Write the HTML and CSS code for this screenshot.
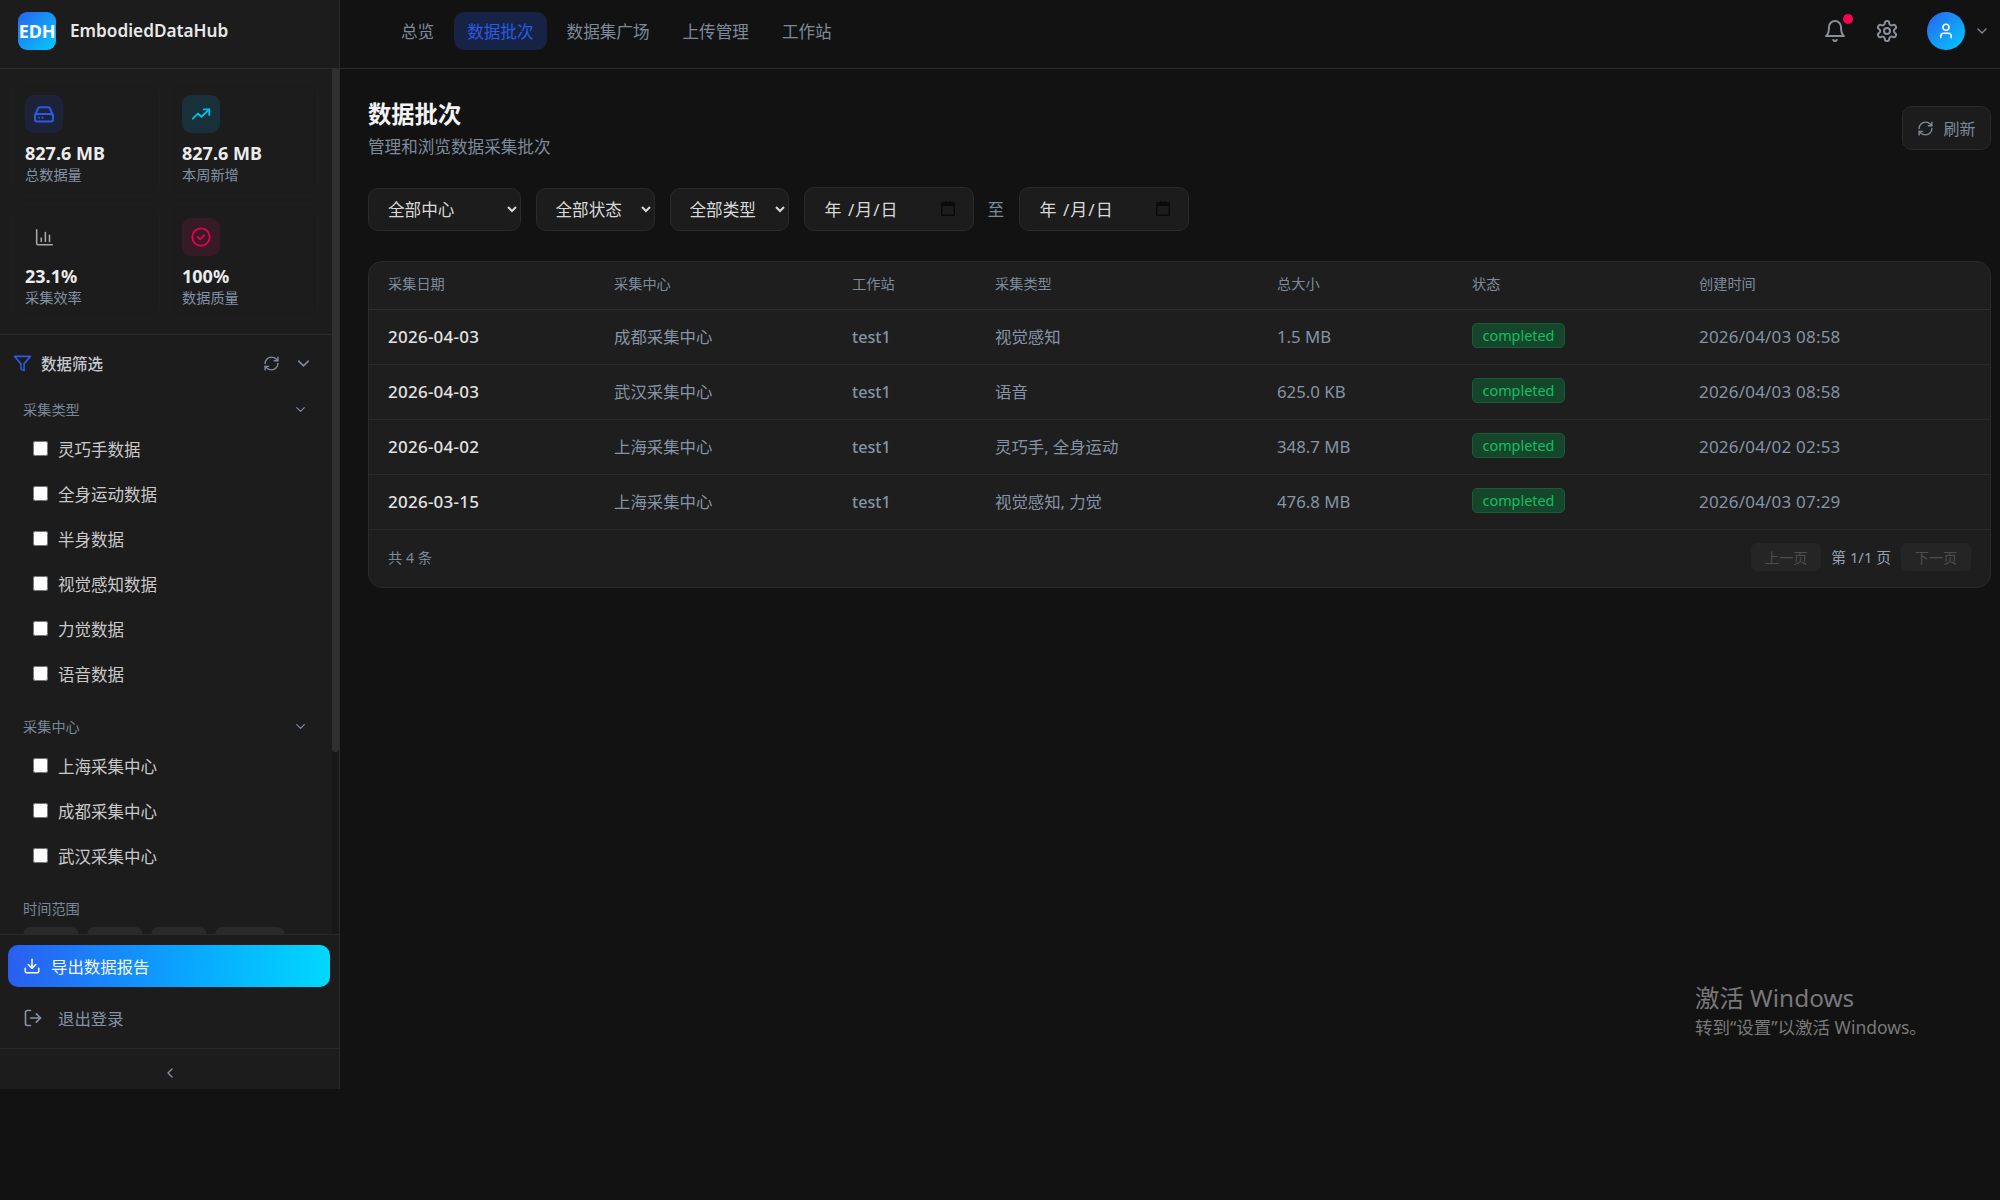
FILE: index.html
```html
<!DOCTYPE html>
<html lang="zh-CN">
<head>
<meta charset="utf-8">
<title>EmbodiedDataHub</title>
<link rel="stylesheet" href="styles.css">
</head>
<body>
<svg class="defs" width="0" height="0" aria-hidden="true">
  <symbol id="i-refresh" viewBox="0 0 24 24"><path d="M3 12a9 9 0 0 1 9-9 9.75 9.75 0 0 1 6.74 2.74L21 8"/><path d="M21 3v5h-5"/><path d="M21 12a9 9 0 0 1-9 9 9.75 9.75 0 0 1-6.74-2.74L3 16"/><path d="M8 16H3v5"/></symbol>
  <symbol id="i-chev" viewBox="0 0 24 24"><path d="m6 9 6 6 6-6"/></symbol>
  <symbol id="i-cal" viewBox="0 0 14 15"><path class="solid" d="M1.5 1H4V0h1.5v1h3V0H10v1h2.5A1.5 1.5 0 0 1 14 2.5v11a1.5 1.5 0 0 1-1.500 1.500h-11A1.500 1.500 0 0 1 0 13.500v-11A1.500 1.500 0 0 1 1.500 1zM1.500 5v8.500h11V5z"/></symbol>
</svg>

<div class="app">
  <aside class="sidebar">
    <div class="brand">
      <div class="logo">EDH</div>
      <span class="brand-name">EmbodiedDataHub</span>
    </div>

    <div class="side-pane">
      <div class="side-scroll">
        <section class="stats">
          <div class="stat">
            <div class="stat-icon tone-blue"><svg class="ico" viewBox="0 0 24 24"><path d="M3 13.500 6 6.500A2 2 0 0 1 7.800 5.300h8.400A2 2 0 0 1 18 6.500l3 7"/><rect x="3" y="12" width="18" height="7.500" rx="2"/><path d="M7 15.800h.01M10.500 15.800h.01"/></svg></div>
            <div class="stat-value">827.6 MB</div>
            <div class="stat-label">总数据量</div>
          </div>
          <div class="stat">
            <div class="stat-icon tone-cyan"><svg class="ico" viewBox="0 0 24 24"><path d="m3 17 5.500-5.500 4 3.500L21 7"/><path d="M15 7h6v6"/></svg></div>
            <div class="stat-value">827.6 MB</div>
            <div class="stat-label">本周新增</div>
          </div>
          <div class="stat">
            <div class="stat-icon tone-grey"><svg class="ico thin" viewBox="0 0 24 24"><path d="M4 4v15a1.500 1.500 0 0 0 1.500 1.500H21"/><path d="M9 17v-4M13.500 17V7M18 17v-7"/></svg></div>
            <div class="stat-value">23.1%</div>
            <div class="stat-label">采集效率</div>
          </div>
          <div class="stat">
            <div class="stat-icon tone-red"><svg class="ico" viewBox="0 0 24 24"><circle cx="12" cy="12" r="9.500"/><path d="m8.500 12 2.500 2.500 4.500-4.500"/></svg></div>
            <div class="stat-value">100%</div>
            <div class="stat-label">数据质量</div>
          </div>
        </section>

        <section class="filters">
          <div class="filter-head">
            <svg class="ico funnel" viewBox="0 0 24 24"><path d="M22 3H2l8 9.460V19l4 2v-8.540z"/></svg>
            <span class="filter-title">数据筛选</span>
            <svg class="ico head-refresh"><use href="#i-refresh"/></svg>
            <svg class="ico head-chev"><use href="#i-chev"/></svg>
          </div>

          <div class="group">
            <div class="group-label"><span>采集类型</span><svg class="ico group-chev"><use href="#i-chev"/></svg></div>
            <label class="check"><input type="checkbox"><span>灵巧手数据</span></label>
            <label class="check"><input type="checkbox"><span>全身运动数据</span></label>
            <label class="check"><input type="checkbox"><span>半身数据</span></label>
            <label class="check"><input type="checkbox"><span>视觉感知数据</span></label>
            <label class="check"><input type="checkbox"><span>力觉数据</span></label>
            <label class="check"><input type="checkbox"><span>语音数据</span></label>
          </div>

          <div class="group">
            <div class="group-label"><span>采集中心</span><svg class="ico group-chev"><use href="#i-chev"/></svg></div>
            <label class="check"><input type="checkbox"><span>上海采集中心</span></label>
            <label class="check"><input type="checkbox"><span>成都采集中心</span></label>
            <label class="check"><input type="checkbox"><span>武汉采集中心</span></label>
          </div>

          <div class="group">
            <div class="group-label"><span>时间范围</span></div>
            <div class="chips">
              <span class="chip"></span>
              <span class="chip"></span>
              <span class="chip"></span>
              <span class="chip chip-wide"></span>
            </div>
          </div>
        </section>
      </div>
      <div class="scroll-track"><div class="scroll-thumb"></div></div>
    </div>

    <div class="side-foot">
      <button class="export"><svg class="ico"  viewBox="0 0 24 24"><path d="M21 15v4a2 2 0 0 1-2 2H5a2 2 0 0 1-2-2v-4"/><path d="m7 10 5 5 5-5"/><path d="M12 15V3"/></svg><span>导出数据报告</span></button>
      <div class="logout"><svg class="ico" viewBox="0 0 24 24"><path d="M9 21H5a2 2 0 0 1-2-2V5a2 2 0 0 1 2-2h4"/><path d="m16 17 5-5-5-5"/><path d="M21 12H9"/></svg><span>退出登录</span></div>
    </div>
    <div class="collapse"><svg class="ico" viewBox="0 0 24 24"><path d="m15 18-6-6 6-6"/></svg></div>
  </aside>

  <div class="content">
    <header class="topbar">
      <nav class="nav">
        <a class="nav-item">总览</a>
        <a class="nav-item active">数据批次</a>
        <a class="nav-item">数据集广场</a>
        <a class="nav-item">上传管理</a>
        <a class="nav-item">工作站</a>
      </nav>
      <div class="top-actions">
        <div class="bell">
          <svg class="ico" viewBox="0 0 24 24"><path d="M6 8a6 6 0 0 1 12 0c0 7 3 9 3 9H3s3-2 3-9"/><path d="M10.300 21a1.940 1.940 0 0 0 3.400 0"/></svg>
          <span class="dot"></span>
        </div>
        <svg class="ico gear" viewBox="0 0 24 24"><path d="M12.220 2h-.44a2 2 0 0 0-2 2v.18a2 2 0 0 1-1 1.730l-.43.25a2 2 0 0 1-2 0l-.15-.08a2 2 0 0 0-2.730.73l-.22.38a2 2 0 0 0 .73 2.730l.15.1a2 2 0 0 1 1 1.720v.51a2 2 0 0 1-1 1.740l-.15.09a2 2 0 0 0-.73 2.730l.22.38a2 2 0 0 0 2.730.73l.15-.08a2 2 0 0 1 2 0l.43.25a2 2 0 0 1 1 1.730V20a2 2 0 0 0 2 2h.44a2 2 0 0 0 2-2v-.18a2 2 0 0 1 1-1.730l.43-.25a2 2 0 0 1 2 0l.15.08a2 2 0 0 0 2.730-.73l.22-.39a2 2 0 0 0-.73-2.730l-.15-.08a2 2 0 0 1-1-1.740v-.5a2 2 0 0 1 1-1.740l.15-.09a2 2 0 0 0 .73-2.730l-.22-.38a2 2 0 0 0-2.730-.73l-.15.08a2 2 0 0 1-2 0l-.43-.25a2 2 0 0 1-1-1.730V4a2 2 0 0 0-2-2z"/><circle cx="12" cy="12" r="3"/></svg>
        <div class="avatar"><svg class="ico" viewBox="0 0 24 24"><path d="M19 21v-2a4 4 0 0 0-4-4H9a4 4 0 0 0-4 4v2"/><circle cx="12" cy="7" r="4"/></svg></div>
        <svg class="ico avatar-chev"><use href="#i-chev"/></svg>
      </div>
    </header>

    <main class="main">
      <div class="page-head">
        <div>
          <h1 class="page-title">数据批次</h1>
          <p class="page-sub">管理和浏览数据采集批次</p>
        </div>
        <button class="refresh"><svg class="ico"><use href="#i-refresh"/></svg><span>刷新</span></button>
      </div>

      <div class="toolbar">
        <select class="sel sel-center"><option>全部中心</option></select>
        <select class="sel sel-small"><option>全部状态</option></select>
        <select class="sel sel-small"><option>全部类型</option></select>
        <div class="date"><span>年 /月/日</span><svg class="cal"><use href="#i-cal"/></svg></div>
        <span class="to">至</span>
        <div class="date"><span>年 /月/日</span><svg class="cal"><use href="#i-cal"/></svg></div>
      </div>

      <div class="panel">
        <table class="table">
          <colgroup>
            <col class="c1"><col class="c2"><col class="c3"><col class="c4"><col class="c5"><col class="c6"><col>
          </colgroup>
          <thead>
            <tr><th>采集日期</th><th>采集中心</th><th>工作站</th><th>采集类型</th><th>总大小</th><th>状态</th><th>创建时间</th></tr>
          </thead>
          <tbody>
            <tr><td class="d">2026-04-03</td><td>成都采集中心</td><td class="m">test1</td><td>视觉感知</td><td class="s">1.5 MB</td><td><span class="badge">completed</span></td><td class="t">2026/04/03 08:58</td></tr>
            <tr><td class="d">2026-04-03</td><td>武汉采集中心</td><td class="m">test1</td><td>语音</td><td class="s">625.0 KB</td><td><span class="badge">completed</span></td><td class="t">2026/04/03 08:58</td></tr>
            <tr><td class="d">2026-04-02</td><td>上海采集中心</td><td class="m">test1</td><td>灵巧手, 全身运动</td><td class="s">348.7 MB</td><td><span class="badge">completed</span></td><td class="t">2026/04/02 02:53</td></tr>
            <tr><td class="d">2026-03-15</td><td>上海采集中心</td><td class="m">test1</td><td>视觉感知, 力觉</td><td class="s">476.8 MB</td><td><span class="badge">completed</span></td><td class="t">2026/04/03 07:29</td></tr>
          </tbody>
        </table>
        <div class="pager">
          <span class="count">共 4 条</span>
          <div class="pages">
            <button class="page-btn">上一页</button>
            <span class="page-no">第 1/1 页</span>
            <button class="page-btn">下一页</button>
          </div>
        </div>
      </div>
    </main>
  </div>
</div>

<div class="watermark">
  <div class="wm-1">激活 Windows</div>
  <div class="wm-2">转到“设置”以激活 Windows。</div>
</div>
</body>
</html>
```

FILE: styles.css
```css
* { box-sizing: border-box; }
html, body { margin: 0; height: 100%; }
body {
  background: #121212;
  color: #e6e6e6;
  font-family: "Noto Sans", "Noto Sans CJK SC", sans-serif;
  font-size: 16.6px;
  overflow: hidden;
}
.defs { position: absolute; }
.ico {
  fill: none;
  stroke: currentColor;
  stroke-width: 2;
  stroke-linecap: round;
  stroke-linejoin: round;
  display: block;
  flex: none;
}
.solid { fill: #0a0a0a; stroke: none; fill-rule: evenodd; }

.app {
  display: grid;
  grid-template-columns: 340px 1fr;
  height: 1089px;
}

/* sidebar */
.sidebar {
  display: flex;
  flex-direction: column;
  background: #1c1c1c;
  border-right: 1px solid #2a2a2a;
  min-height: 0;
}
.brand {
  height: 69px;
  flex: none;
  display: flex;
  align-items: center;
  gap: 14px;
  padding: 0 18px 7px;
  border-bottom: 1px solid #2c2c2c;
}
.logo {
  width: 38px;
  height: 38px;
  border-radius: 9px;
  background: linear-gradient(135deg, #2a62f0, #00ccff);
  color: #fff;
  font-weight: 700;
  font-size: 18px;
  display: flex;
  align-items: center;
  justify-content: center;
  letter-spacing: -0.2px;
}
.brand-name { font-weight: 600; font-size: 17.2px; color: #e8e8e8; }

.side-pane {
  position: relative;
  flex: 1;
  min-height: 0;
}
.side-scroll { height: 100%; overflow: hidden; }
.scroll-track {
  position: absolute;
  top: 0;
  right: 0;
  bottom: 0;
  width: 7px;
  background: #181818;
}
.scroll-thumb { height: 683px; background: #303030; border-radius: 0 0 3px 3px; }

.stats {
  display: grid;
  grid-template-columns: 148px 149px;
  gap: 8px 9px;
  padding: 12px 12px 15px;
  border-bottom: 1px solid #2a2a2a;
}
.stat {
  height: 115px;
  padding: 13px 12px 0;
  border: 1px solid #1f1f1f;
  border-radius: 10px;
}
.stat-icon {
  width: 38px;
  height: 38px;
  border-radius: 9px;
  display: flex;
  align-items: center;
  justify-content: center;
}
.stat-icon .ico { width: 22px; height: 22px; }
.tone-blue { background: #1c2338; color: #2a5ae6; }
.tone-blue .ico { width: 24px; height: 24px; }
.tone-cyan { background: #17303a; color: #00bfe8; }
.tone-grey { background: transparent; color: #a8a8a8; }
.thin { stroke-width: 1.700; }
.tone-red { background: #361b27; color: #e8004d; }
.stat-value {
  margin-top: 8px;
  font-size: 18px;
  font-weight: 700;
  line-height: 24px;
  color: #ececec;
}
.stat-label { margin-top: 1px; font-size: 14.200px; line-height: 18px; color: #8290a3; }

.filters { padding: 0 11px 0 0; }
.filter-head {
  height: 57px;
  display: flex;
  align-items: center;
  padding-left: 13px;
}
.funnel { width: 19px; height: 19px; color: #2a5ae6; }
.filter-title { margin-left: 9px; font-size: 15.500px; font-weight: 500; color: #c4c9d0; flex: 1; }
.head-refresh { width: 17px; height: 17px; color: #7d8a9c; }
.head-chev { width: 19px; height: 19px; margin: 0 15px 0 14px; color: #7d8a9c; }

.group { padding-left: 23px; margin-bottom: 13px; }
.group-label {
  height: 34px;
  display: flex;
  align-items: center;
  justify-content: space-between;
  font-size: 14.200px;
  color: #7a8798;
  padding-right: 19.500px;
}
.group-chev { width: 15px; height: 15px; margin-right: 1px; color: #7d8a9c; }
.check {
  height: 45px;
  display: flex;
  align-items: center;
  gap: 10px;
  padding-left: 10px;
  font-size: 16.500px;
  color: #c9c9c9;
}
.check input { margin: 0; width: 15px; height: 15px; flex: none; }
.chips { display: flex; gap: 8px; padding-top: 2px; }
.chip {
  width: 56px;
  height: 32px;
  border-radius: 8px;
  background: #2a2a2a;
}
.chip-wide { width: 70px; }

.side-foot {
  flex: none;
  height: 115px;
  border-top: 1px solid #2a2a2a;
  border-bottom: 1px solid #282828;
  padding: 10px 10px 0 8px;
}
.export {
  width: 322px;
  height: 42px;
  border: 0;
  border-radius: 10px;
  background: linear-gradient(90deg, #2a5ef0, #0aa5ff 55%, #00d8ff);
  color: #f5f5f5;
  display: flex;
  align-items: center;
  gap: 10px;
  padding: 0 15px;
  font: inherit;
  font-size: 16.400px;
}
.export .ico { width: 18px; height: 18px; color: #fff; }
.logout {
  height: 42px;
  margin-top: 10px;
  display: flex;
  align-items: center;
  gap: 15px;
  padding-left: 15px;
  color: #8592a4;
  font-size: 16.400px;
}
.logout .ico { width: 20px; height: 20px; }
.collapse {
  height: 40px;
  flex: none;
  display: flex;
  align-items: center;
  justify-content: center;
  padding-top: 8px;
  color: #8592a4;
}
.collapse .ico { width: 16px; height: 16px; }

/* topbar */
.content { display: flex; flex-direction: column; min-width: 0; }
.topbar {
  height: 69px;
  flex: none;
  display: flex;
  align-items: center;
  justify-content: space-between;
  border-bottom: 1px solid #2c2c2c;
  padding: 0 0 7px 48px;
}
.nav { display: flex; gap: 7px; align-items: center; }
.nav-item {
  height: 38px;
  display: flex;
  align-items: center;
  padding: 0 13px;
  border-radius: 10px;
  color: #7d8a9c;
  font-size: 16.600px;
}
.nav-item.active { background: #172344; color: #2a5ae6; }
.top-actions { display: flex; align-items: center; padding-right: 10px; }
.bell { position: relative; color: #8a8f98; width: 24px; height: 24px; }
.bell .ico { width: 24px; height: 24px; }
.dot {
  position: absolute;
  top: -5px;
  right: -6px;
  width: 10px;
  height: 10px;
  border-radius: 50%;
  background: #ff0050;
}
.gear { width: 24px; height: 24px; color: #8a8f98; margin-left: 28px; }
.avatar {
  width: 38px;
  height: 38px;
  border-radius: 50%;
  margin-left: 28px;
  background: linear-gradient(135deg, #2a62f0, #00ccff);
  color: #fff;
  display: flex;
  align-items: center;
  justify-content: center;
}
.avatar .ico { width: 18px; height: 18px; }
.avatar-chev { width: 16px; height: 16px; margin-left: 9px; color: #7d8a9c; }

/* main */
.main { padding: 29px 9px 0 28px; }
.page-head { display: flex; justify-content: space-between; align-items: flex-start; }
.page-title { margin: 0; font-size: 23.300px; font-weight: 700; line-height: 32px; color: #f4f4f4; }
.page-sub { margin: 5px 0 0; font-size: 16.600px; line-height: 24px; color: #7d8a9c; }
.refresh {
  width: 89px;
  height: 44px;
  margin-top: 8px;
  border: 1px solid #2a2a2a;
  border-radius: 10px;
  background: #1c1c1c;
  color: #7d8a9c;
  display: flex;
  align-items: center;
  justify-content: center;
  gap: 9px;
  font: inherit;
  font-size: 16px;
}
.refresh .ico { width: 17px; height: 17px; }

.toolbar { display: flex; align-items: center; margin-top: 28px; gap: 14.500px; }
.sel {
  height: 43px;
  border: 1px solid #2a2a2a;
  border-radius: 10px;
  background: #1c1c1c;
  color: #d9d9d9;
  font: inherit;
  font-size: 16.600px;
  padding: 0 0 0 15px;
}
.sel-center { width: 153px; }
.sel-small { width: 119.500px; }
.date {
  width: 170.500px;
  height: 44px;
  border: 1px solid #2a2a2a;
  border-radius: 10px;
  background: #1c1c1c;
  color: #d9d9d9;
  display: flex;
  align-items: center;
  justify-content: space-between;
  padding: 0 18px 1px 20px;
  font-size: 17px;
  letter-spacing: 1px;
}
.cal { width: 14px; height: 15px; }
.to { color: #7d8a9c; margin: 0 0 0 -1px; font-size: 16.600px; }

.panel {
  margin-top: 30px;
  background: #1e1e1e;
  border: 1px solid #2a2a2a;
  border-radius: 14px;
  overflow: hidden;
}
.table { width: 100%; border-collapse: collapse; table-layout: fixed; }
.c1 { width: 226px; }
.c2 { width: 238px; }
.c3 { width: 143px; }
.c4 { width: 282px; }
.c5 { width: 195px; }
.c6 { width: 227px; }
th {
  height: 47px;
  padding: 0 0 4px 19px;
  text-align: left;
  font-weight: 400;
  font-size: 14.200px;
  color: #7d8a9c;
  border-bottom: 1px solid #2e2e2e;
}
td {
  height: 55px;
  padding: 0 0 2px 19px;
  font-size: 16.400px;
  color: #8593a6;
  border-bottom: 1px solid #2a2a2a;
}
td.d { color: #e2e2e2; font-weight: 500; font-size: 17px; letter-spacing: .25px; padding-bottom: 0; }
td.m { font-weight: 500; font-size: 16.200px; padding-bottom: 0; }
td.s { font-size: 16.800px; padding-bottom: 0; }
td.t { font-size: 17px; letter-spacing: .2px; padding-bottom: 0; }
.badge {
  display: inline-block;
  width: 93px;
  height: 25px;
  line-height: 23px;
  text-align: center;
  border: 1px solid #195c36;
  border-radius: 5px;
  background: #15452a;
  color: #10c060;
  font-size: 14.400px;
}
.pager {
  height: 57px;
  display: flex;
  align-items: center;
  justify-content: space-between;
  padding: 0 19px 3px;
}
.count { font-size: 14.200px; color: #7d8a9c; }
.pages { display: flex; align-items: center; gap: 10px; }
.page-btn {
  width: 70px;
  height: 28px;
  border: 0;
  border-radius: 6px;
  background: #252525;
  color: #4e4e4e;
  font: inherit;
  font-size: 14.200px;
  padding: 0;
}
.page-no { font-size: 14.800px; color: #96a1b0; }

.watermark {
  position: absolute;
  left: 1695px;
  top: 982px;
  color: #787878;
}
.wm-1 { font-size: 24.400px; line-height: 32px; }
.wm-2 { font-size: 17.500px; line-height: 24px; margin-top: 1px; }
```
